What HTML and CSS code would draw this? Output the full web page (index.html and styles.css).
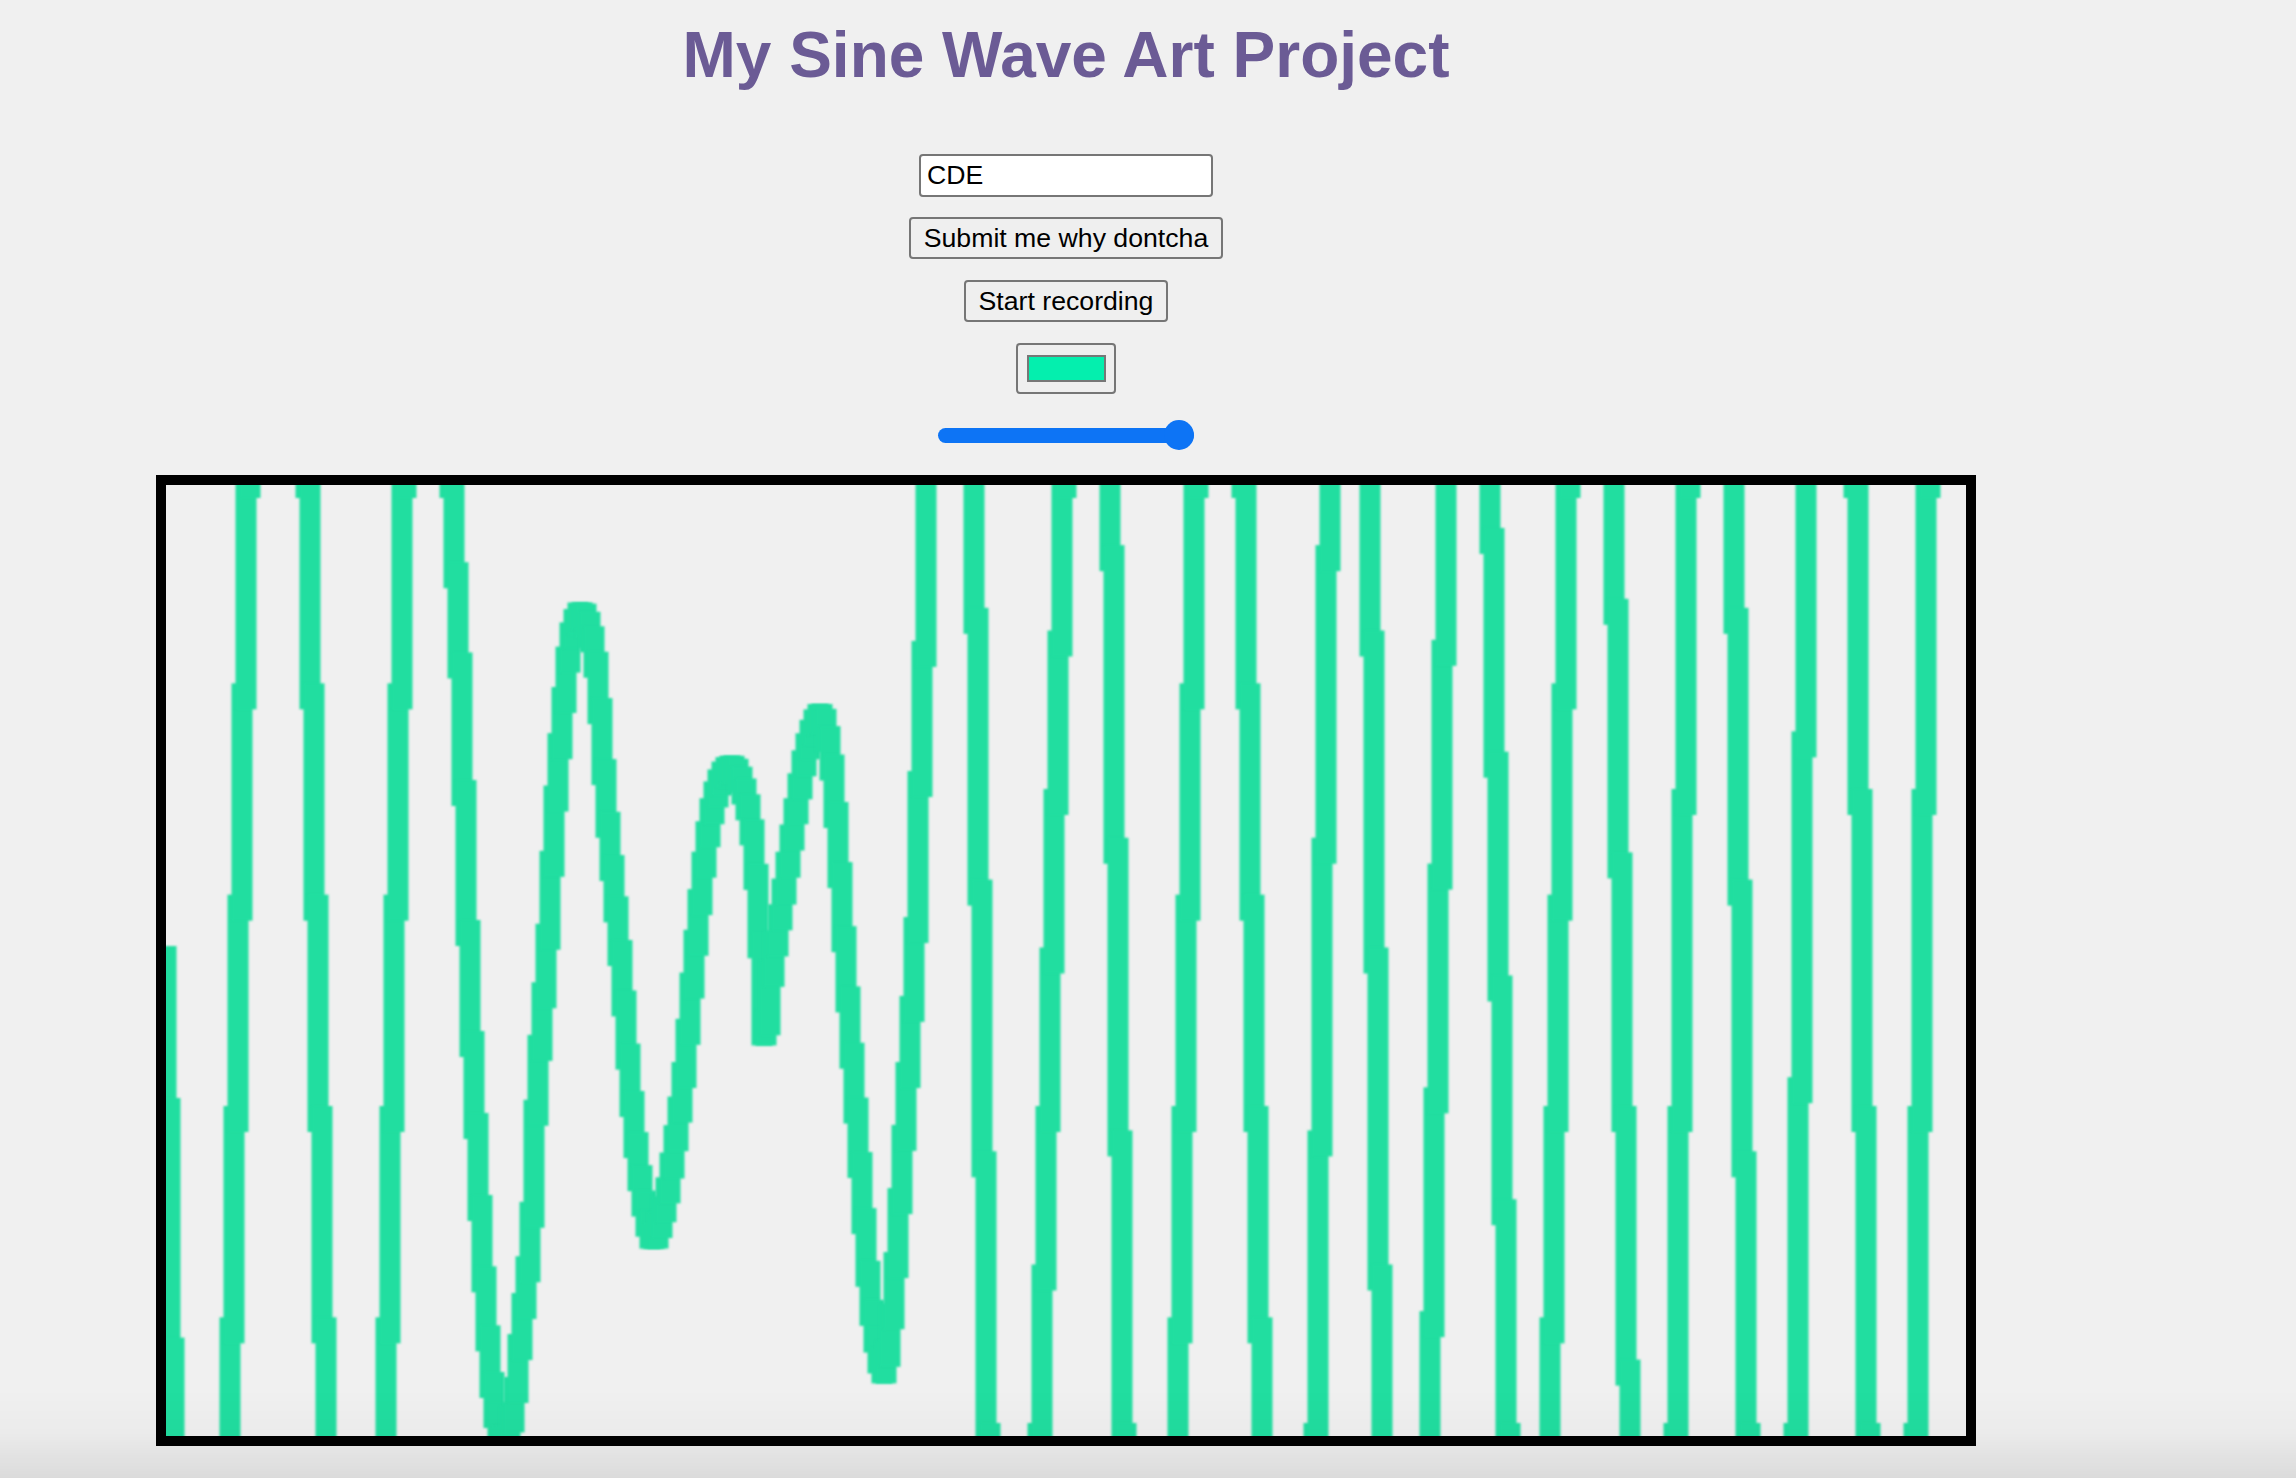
FILE: index.html
```html
<!DOCTYPE html>
<html lang="en">
<head>
<meta charset="utf-8">
<title>My Sine Wave Art Project</title>
<link rel="stylesheet" href="styles.css">
</head>
<body>
<div class="page">
  <h1 class="title">My Sine Wave Art Project</h1>
  <div class="controls">
    <input class="text-input" type="text" value="CDE">
    <button class="btn btn-submit" type="button">Submit me why dontcha</button>
    <button class="btn btn-record" type="button">Start recording</button>
    <input class="color-input" type="color" value="#04efae">
    <input class="slider" type="range" min="0" max="100" value="100">
    <canvas id="art" class="art" width="1800" height="951"></canvas>
  </div>
</div>
<div class="shade"></div>
<script src="script.js"></script>
</body>
</html>
```

FILE: styles.css
```css
html, body {
  margin: 0;
  padding: 0;
  background: #f0f0f0;
}

body {
  font-family: "Liberation Sans", Arial, sans-serif;
  overflow: hidden;
}

.page {
  width: 2132px;
  padding-top: 18px;
  display: flex;
  flex-direction: column;
  align-items: center;
}

.title {
  margin: 0;
  font-size: 64px;
  line-height: 74px;
  font-weight: 700;
  color: #6b5b95;
}

.controls {
  margin-top: 62px;
  display: flex;
  flex-direction: column;
  align-items: center;
}

.text-input {
  box-sizing: border-box;
  width: 294px;
  height: 43px;
  margin: 0;
  padding: 0 6px;
  border: 2px solid #767676;
  border-radius: 4px;
  background: #ffffff;
  font-family: "Liberation Sans", Arial, sans-serif;
  font-size: 26.67px;
  color: #000000;
  outline: none;
}

.btn {
  box-sizing: border-box;
  height: 42px;
  margin: 0;
  padding: 0 13px;
  border: 2px solid #767676;
  border-radius: 4px;
  background: #efefef;
  font-family: "Liberation Sans", Arial, sans-serif;
  font-size: 26.67px;
  line-height: 38px;
  color: #000000;
}

.btn-submit {
  margin-top: 20px;
}

.btn-record {
  margin-top: 21px;
}

.color-input {
  -webkit-appearance: none;
  appearance: none;
  box-sizing: border-box;
  width: 100px;
  height: 51px;
  margin: 21px 0 0;
  padding: 0;
  border: 2px solid #767676;
  border-radius: 4px;
  background: #efefef;
}

.color-input::-webkit-color-swatch-wrapper {
  padding: 10px 8px 10px 9px;
}

.color-input::-webkit-color-swatch {
  border: 2px solid #777777;
  border-radius: 0;
}

.slider {
  -webkit-appearance: none;
  appearance: none;
  width: 256px;
  height: 30px;
  margin: 26px 0 0;
  padding: 0;
  background: transparent;
}

.slider::-webkit-slider-runnable-track {
  height: 15px;
  border-radius: 8px;
  background: #0d74f5;
}

.slider::-webkit-slider-thumb {
  -webkit-appearance: none;
  appearance: none;
  width: 30px;
  height: 30px;
  margin-top: -7.5px;
  border: none;
  border-radius: 50%;
  background: #0d74f5;
}

.art {
  display: block;
  margin-top: 25px;
  border: 10px solid #000000;
  background: #f0f0f0;
}

.shade {
  position: fixed;
  left: 0;
  right: 0;
  bottom: 0;
  height: 90px;
  pointer-events: none;
  background: linear-gradient(to bottom, rgba(0, 0, 0, 0) 0%, rgba(0, 0, 0, 0.02) 50%, rgba(0, 0, 0, 0.085) 100%);
}
```

FILE: script.js
```js
(function () {
  var c = document.getElementById('art');
  var ctx = c.getContext('2d');
  var W = c.width, H = c.height;
  ctx.fillStyle = '#f0f0f0';
  ctx.fillRect(0, 0, W, H);

  var A = [[0,474],[5,664],[10,1000],[37,1400],[64,1000],[66,951],[84,0],[85,-50],[114,-400],
    [143,-50],[144,0],[162,951],[163,1000],[192,1400],[221,1000],[222,951],[240,0],[241,-50],
    [264,-400],[287,-50],[288,0],[297,203],[306,518],[316,723],[322,830],[328,900],[334,945]];

  var M = [[340,960],[346,945],[352,905],[358,840],[367,748],[373,608],[383,468],[391,328],
    [400,215],[407,155],[417,130],[427,150],[434,200],[443,328],[456,468],[467,608],[477,700],
    [489,752],[501,720],[511,660],[520,590],[531,468],[543,356],[555,300],[569,284],[581,310],
    [589,356],[595,440],[601,555],[609,480],[621,400],[633,320],[643,265],[656,232],[665,260],
    [672,330],[683,500],[696,680],[705,800],[713,860],[721,884],[729,820],[737,700],[751,468],
    [756,299],[761,131],[763,0]];

  var strips = [[810,824,'d'],[876,900,'u'],[947,960,'d'],[1014,1032,'u'],[1080,1098,'d'],
    [1152,1165,'u'],[1206,1218,'d'],[1266,1283,'u'],[1327,1344,'d'],[1386,1404,'u'],
    [1450,1465,'d'],[1512,1524,'u'],[1570,1584,'d'],[1632,1643,'u'],[1692,1704,'d'],
    [1752,1764,'u']];

  var R = [];
  var prevX = 763;
  strips.forEach(function (s) {
    var down = s[2] === 'd';
    R.push([(prevX + s[0]) / 2, down ? -400 : H + 450]);
    R.push([s[0], down ? 0 : H]);
    R.push([s[1], down ? H : 0]);
    prevX = s[1];
  });
  R.push([1790, -400]);

  function cr(p0, p1, p2, p3, t) {
    var t2 = t * t, t3 = t2 * t;
    function f(a, b, c2, d) {
      return 0.5 * ((2 * b) + (-a + c2) * t + (2 * a - 5 * b + 4 * c2 - d) * t2 + (-a + 3 * b - 3 * c2 + d) * t3);
    }
    return [f(p0[0], p1[0], p2[0], p3[0]), f(p0[1], p1[1], p2[1], p3[1])];
  }

  var dense = A.slice();
  var P = [A[A.length - 2], A[A.length - 1]].concat(M).concat([R[0]]);
  for (var i = 1; i < P.length - 2; i++) {
    for (var k = 1; k <= 10; k++) {
      dense.push(cr(P[i - 1], P[i], P[i + 1], P[i + 2], k / 10));
    }
  }
  dense = dense.concat(R);

  var j = 0;
  function yAt(x) {
    while (j < dense.length - 2 && dense[j + 1][0] < x) j++;
    var a = dense[j], b = dense[j + 1];
    if (b[0] === a[0]) return b[1];
    var t = (x - a[0]) / (b[0] - a[0]);
    return a[1] + (b[1] - a[1]) * t;
  }

  var step = 4, w = 21, cap = 13, xEnd = 1776;
  var xs = [], ys = [];
  for (var x = 0; x <= xEnd; x += step) {
    xs.push(x);
    ys.push(yAt(x));
  }
  ctx.filter = 'blur(0.8px)';
  ctx.fillStyle = '#21dea0';
  for (var n = 0; n < xs.length - 1; n++) {
    var y0 = ys[n], y1 = ys[n + 1];
    var top = Math.min(y0, y1) - cap;
    var bot = Math.max(y0, y1) + cap;
    if (bot < 0 || top > H) continue;
    ctx.fillRect(xs[n] - w / 2, top, w, bot - top);
  }
})();
```
